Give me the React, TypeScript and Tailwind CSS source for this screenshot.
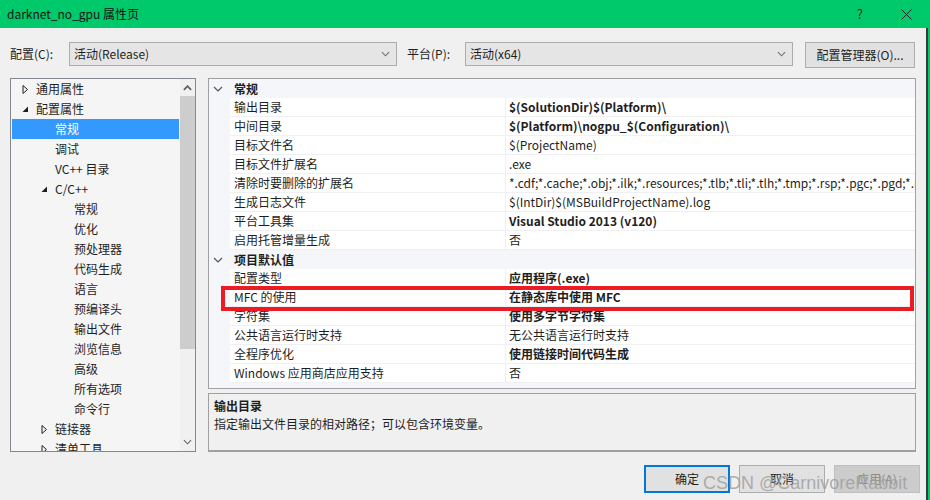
import React from "react";

type TreeItem = {
  label: string;
  level: 0 | 1 | 2;
  expander?: "open" | "closed";
  selected?: boolean;
};

const treeItems: TreeItem[] = [
  { label: "通用属性", level: 0, expander: "closed" },
  { label: "配置属性", level: 0, expander: "open" },
  { label: "常规", level: 1, selected: true },
  { label: "调试", level: 1 },
  { label: "VC++ 目录", level: 1 },
  { label: "C/C++", level: 1, expander: "open" },
  { label: "常规", level: 2 },
  { label: "优化", level: 2 },
  { label: "预处理器", level: 2 },
  { label: "代码生成", level: 2 },
  { label: "语言", level: 2 },
  { label: "预编译头", level: 2 },
  { label: "输出文件", level: 2 },
  { label: "浏览信息", level: 2 },
  { label: "高级", level: 2 },
  { label: "所有选项", level: 2 },
  { label: "命令行", level: 2 },
  { label: "链接器", level: 1, expander: "closed" },
  { label: "清单工具", level: 1, expander: "closed" },
];

type Prop = { name: string; value: string; bold?: boolean };

const generalProps: Prop[] = [
  { name: "输出目录", value: "$(SolutionDir)$(Platform)\\", bold: true },
  { name: "中间目录", value: "$(Platform)\\nogpu_$(Configuration)\\", bold: true },
  { name: "目标文件名", value: "$(ProjectName)" },
  { name: "目标文件扩展名", value: ".exe" },
  {
    name: "清除时要删除的扩展名",
    value:
      "*.cdf;*.cache;*.obj;*.ilk;*.resources;*.tlb;*.tli;*.tlh;*.tmp;*.rsp;*.pgc;*.pgd;*.meta;*.tlog;*.manifest",
  },
  { name: "生成日志文件", value: "$(IntDir)$(MSBuildProjectName).log" },
  { name: "平台工具集", value: "Visual Studio 2013 (v120)", bold: true },
  { name: "启用托管增量生成", value: "否" },
];

const defaultProps: Prop[] = [
  { name: "配置类型", value: "应用程序(.exe)", bold: true },
  { name: "MFC 的使用", value: "在静态库中使用 MFC", bold: true },
  { name: "字符集", value: "使用多字节字符集", bold: true },
  { name: "公共语言运行时支持", value: "无公共语言运行时支持" },
  { name: "全程序优化", value: "使用链接时间代码生成", bold: true },
  { name: "Windows 应用商店应用支持", value: "否" },
];

const padByLevel = ["pl-[10px]", "pl-[29px]", "pl-[48px]"];

function Expander({ kind }: { kind?: "open" | "closed" }) {
  if (kind === "closed")
    return (
      <svg width="7" height="9" viewBox="0 0 7 9" className="ml-[1px]">
        <path d="M1 0.5 L5.5 4.5 L1 8.5 Z" fill="none" stroke="#1e1e1e" strokeWidth="1" />
      </svg>
    );
  if (kind === "open")
    return (
      <svg width="7" height="7" viewBox="0 0 7 7" className="ml-[1px]">
        <path d="M6 0.5 L6 6 L0.5 6 Z" fill="#1e1e1e" />
      </svg>
    );
  return null;
}

function Chevron({ up = false, color = "#6a6a6a", w = 10 }: { up?: boolean; color?: string; w?: number }) {
  return (
    <svg width={w} height="6" viewBox="0 0 10 6">
      <polyline
        points={up ? "1,5 5,1 9,5" : "1,1 5,5 9,1"}
        fill="none"
        stroke={color}
        strokeWidth={up ? 2 : 1.2}
      />
    </svg>
  );
}

function Tree() {
  return (
    <div className="w-[186px] h-[374px] border border-[#828790] flex overflow-hidden">
      <div className="flex-1 bg-[#f5f5f5] overflow-hidden">
        {treeItems.map((item, i) => (
          <div
            key={i}
            className={`h-[20px] flex items-center ${padByLevel[item.level]} ${
              item.selected ? "bg-[#3399ff] text-white mx-[1px] !pl-[28px]" : "text-[#1e1e1e]"
            }`}
          >
            <div className="w-[15px] flex items-center">
              <Expander kind={item.expander} />
            </div>
            <span className="text-[12px] whitespace-nowrap">{item.label}</span>
          </div>
        ))}
      </div>
      <div className="w-[15px] bg-[#f0f0f0] flex flex-col">
        <div className="h-[17px] flex items-center justify-center">
          <Chevron up color="#606060" w={9} />
        </div>
        <div className="h-[253px] bg-[#cdcdcd]"></div>
        <div className="flex-1"></div>
        <div className="h-[17px] flex items-center justify-center mb-[1px]">
          <Chevron color="#606060" w={9} />
        </div>
      </div>
    </div>
  );
}

function CategoryRow({ title }: { title: string }) {
  return (
    <div className="h-[19px] flex items-center bg-[#f4f6fa]">
      <div className="w-[25px] pl-[4px] flex items-center">
        <Chevron color="#555" w={10} />
      </div>
      <span className="text-[12px] font-bold text-[#1e1e1e]">{title}</span>
    </div>
  );
}

function PropRow({ p }: { p: Prop }) {
  return (
    <div className="h-[19px] flex bg-[#f4f6fa]">
      <div className="w-[21px] shrink-0"></div>
      <div className="w-[275px] shrink-0 bg-white border-b border-[#eef0f4] pl-[4px] flex items-center">
        <span className="text-[12px] text-[#1e1e1e] whitespace-nowrap">{p.name}</span>
      </div>
      <div className="flex-1 min-w-0 bg-white border-b border-l border-[#eef0f4] pl-[3px] flex items-center overflow-hidden">
        <span className={`text-[12px] text-[#1e1e1e] whitespace-nowrap ${p.bold ? "font-bold" : ""}`}>
          {p.value}
        </span>
      </div>
    </div>
  );
}

function Grid() {
  return (
    <div className="relative h-[311px] border border-[#a0a0a0] bg-[#f4f6fa] overflow-hidden">
      <CategoryRow title="常规" />
      {generalProps.map((p, i) => (
        <PropRow key={i} p={p} />
      ))}
      <CategoryRow title="项目默认值" />
      {defaultProps.map((p, i) => (
        <PropRow key={i} p={p} />
      ))}
      <div className="absolute left-[12px] top-[207px] w-[693px] h-[25px] border-[4px] border-[#ed1c24]"></div>
    </div>
  );
}

function Combo({ text, width }: { text: string; width: string }) {
  return (
    <div className={`${width} h-[24px] border border-[#adadad] bg-[#e5e5e5] flex items-center pl-[4px] pr-[6px]`}>
      <span className="flex-1 text-[12px] text-[#1e1e1e]">{text}</span>
      <Chevron color="#707070" w={9} />
    </div>
  );
}

function DlgButton({ label, variant }: { label: string; variant: "default" | "normal" | "disabled" }) {
  const cls =
    variant === "default"
      ? "border-2 border-[#0078d7] bg-[#e1e1e1] text-[#1e1e1e]"
      : variant === "disabled"
      ? "border border-[#bfbfbf] bg-[#cccccc] text-[#8a8a8a]"
      : "border border-[#adadad] bg-[#e1e1e1] text-[#1e1e1e]";
  return (
    <div className={`w-[86px] h-[28px] flex items-center justify-center text-[12px] ${cls}`}>{label}</div>
  );
}

export default function App() {
  return (
    <div
      className="w-[930px] h-[500px] relative overflow-hidden bg-[#f0f0f0] flex flex-col"
      style={{ fontFamily: '"Noto Sans CJK SC", "Noto Sans", sans-serif' }}
    >
      <div className="h-[28px] bg-[#00c96b] flex items-center pl-[7px] pr-[18px] shrink-0">
        <span className="text-[12px] text-[#111] flex-1">darknet_no_gpu 属性页</span>
        <span className="text-[13px] text-[#222] mr-[38px]">?</span>
        <svg width="11" height="11" viewBox="0 0 11 11">
          <path d="M0.5 0.5 L10.5 10.5 M10.5 0.5 L0.5 10.5" stroke="#222" strokeWidth="1" />
        </svg>
      </div>

      <div className="flex flex-1">
        <div className="w-[926px] flex flex-col">
          <div className="mt-[14px] h-[26px] flex items-start">
            <span className="w-[69px] shrink-0 pl-[10px] h-[24px] flex items-center text-[12px] text-[#1e1e1e]">
              配置(C):
            </span>
            <Combo text="活动(Release)" width="w-[328px] shrink-0" />
            <span className="w-[68px] shrink-0 pl-[10px] h-[24px] flex items-center text-[12px] text-[#1e1e1e]">
              平台(P):
            </span>
            <Combo text="活动(x64)" width="w-[328px] shrink-0" />
            <div className="ml-[12px] w-[110px] shrink-0 h-[26px] border border-[#adadad] bg-[#e1e1e1] flex items-center justify-center text-[12px] text-[#1e1e1e]">
              配置管理器(O)...
            </div>
          </div>

          <div className="mt-[10px] pl-[10px] flex gap-[12px]">
            <Tree />
            <div className="w-[708px] flex flex-col">
              <Grid />
              <div className="mt-[4px] h-[59px] border border-b-2 border-[#a0a0a0] bg-[#f0f0f0] px-[5px] pt-[3px]">
                <div className="text-[12px] font-bold text-[#1e1e1e] leading-[18px]">输出目录</div>
                <div className="text-[12px] text-[#1e1e1e] leading-[18px]">指定输出文件目录的相对路径；可以包含环境变量。</div>
              </div>
            </div>
          </div>

          <div className="mt-[13px] pr-[6px] flex justify-end gap-[9px]">
            <DlgButton label="确定" variant="default" />
            <DlgButton label="取消" variant="normal" />
            <DlgButton label="应用(A)" variant="disabled" />
          </div>
        </div>
        <div className="w-[2px] bg-[#3a3a3a]"></div>
        <div className="w-[2px] bg-[#00c96b]"></div>
      </div>

      <div
        className="absolute left-[703px] top-[470px] text-[18px] text-[#a0a0a0]/85 whitespace-nowrap pointer-events-none"
        style={{ fontFamily: '"Liberation Sans", sans-serif' }}
      >
        CSDN @CarnivoreRabbit
      </div>
    </div>
  );
}
